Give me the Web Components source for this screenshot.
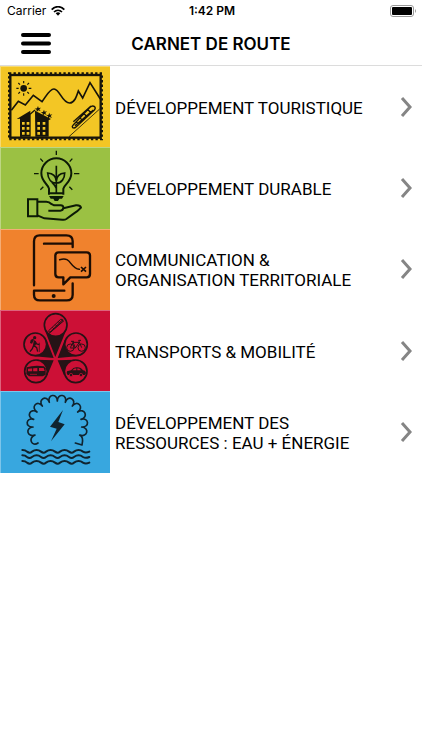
<!DOCTYPE html>
<html lang="fr">
<head>
<meta charset="utf-8">
<meta name="viewport" content="width=device-width, initial-scale=1">
<title>Carnet de route</title>
<style>
body { margin: 0; background: #fff; color: #000; font-family: Roboto, "Liberation Sans", sans-serif; }
</style>
</head>
<body>
<app-screen></app-screen>

<template id="t-status">
  <style>
    :host { display: grid; grid-template-columns: 1fr auto 1fr; align-items: center; height: 22px; padding: 0 5px 0 7px; font: 400 12px/16px Inter, "Liberation Sans", sans-serif; }
    .left { display: flex; align-items: center; gap: 5px; }
    .time { font-weight: 600; }
    .battery { justify-self: end; }
    svg { display: block; }
  </style>
  <span class="left"><span>Carrier</span>
    <svg width="14" height="10" viewBox="0 0 42 30" fill="none" stroke="#000" stroke-width="5"><path d="M2 11C13-1 29-1 40 11M9 18c7-7 17-7 24 0"/><path d="M14 22q7-6 14 0l-7 7z" fill="#000" stroke="none"/></svg>
  </span>
  <span class="time">1:42 PM</span>
  <svg class="battery" width="27" height="12" viewBox="0 0 27 12"><rect x=".5" y=".5" width="23" height="11" rx="2.5" fill="#fff" stroke="#999"/><rect x="2" y="2" width="20" height="8" rx="1" fill="#000"/><path d="M25 4q2 2 0 4z" fill="#999"/></svg>
</template>

<template id="t-nav">
  <style>
    :host { display: grid; grid-template-columns: 72px 1fr 72px; align-items: center; height: 43px; border-bottom: 1px solid #dcdcdc; }
    button { border: 0; background: none; margin: 0; padding: 0 0 0 20px; height: 43px; display: flex; align-items: center; cursor: pointer; }
    h1 { margin: 0; font: 600 17px/22px Inter, "Liberation Sans", sans-serif; text-align: center; white-space: nowrap; }
    svg { display: block; }
  </style>
  <button type="button" aria-label="Menu"><svg width="32" height="24" viewBox="0 0 32 24" stroke="#000" stroke-width="4" stroke-linecap="round"><path d="M3 3h26M3 11.5h26M3 20h26"/></svg></button>
  <h1><slot></slot></h1>
</template>

<template id="t-row">
  <style>
    :host { display: block; }
    a { display: grid; grid-template-columns: 110px 1fr 22px; align-items: center; height: 100%; color: #000; text-decoration: none; font-size: 17px; line-height: 20px; }
    .thumb { align-self: stretch; display: grid; }
    .label { padding: 4px 16px 2px 5px; }
    svg { display: block; }
  </style>
  <a href="#"><span class="thumb"><slot name="icon"></slot></span><span class="label"><slot></slot></span>
    <svg width="14" height="22" viewBox="0 0 14 22" fill="none" stroke="#858585" stroke-width="3"><path d="M2 2l8 9-8 9"/></svg></a>
</template>

<template id="t-tourism">
  <svg viewBox="0 6 330 244" preserveAspectRatio="none" fill="none" stroke="#17140a">
    <rect x="31" y="33" width="271" height="188" stroke-width="7"/>
    <rect x="27" y="28" width="279" height="198" stroke-width="6" stroke-dasharray="7 6.6"/>
    <path d="M34 139L55 112l21 11 24-29 26 19C139 96 149 74 162 75c18 1 24 42 47 42 14 0 20-18 26-36l13 21 22-46 31 49" stroke-width="5"/>
    <circle cx="71" cy="73" r="10" fill="#17140a" stroke="none"/>
    <path d="M71 51v7M71 88v7M49 73h7M86 73h8M55 57l5 5M82 84l5 5M55 89l5-5M82 62l5-5" stroke-width="3.5"/>
    <g fill="#17140a" stroke="none"><path d="M50 165l41-25v12l-25 11v55h-6v-54zM105 140l48 25-7 4v49h-40z"/><path d="M60 166h32v-18l-32 15zM60 166h32v52H60z"/>
    <path d="M114 126l2 6 7-1-5 5 4 6-7-3-5 5v-7l-6-3 7-1zM132 137l2 6 7-1-5 5 4 6-7-3-5 5v-7l-6-3 7-1zM148 146l2 6 7-1-5 5 4 6-7-3-5 5v-7l-6-3 7-1z"/></g>
    <path d="M91 150l14-12" stroke-width="4"/>
    <path d="M66 174h8v8h-8zM80 174h8v8h-8zM66 189h8v8h-8zM80 189h8v8h-8zM66 204h8v8h-8zM80 204h8v8h-8zM112 174h8v8h-8zM128 174h8v8h-8zM112 189h8v8h-8zM128 189h8v8h-8zM112 204h8v8h-8zM128 204h8v8h-8z" fill="#f3c625" stroke="none"/>
    <path d="M207 218L299 135" stroke-width="2.5"/>
    <path d="M219 184l51-54q7-7 14-2 4 4-1 10l-55 51q-5 5-10 2-3-3 1-7zM220 173l53-47M229 174l8 7M240 162l9 8M252 149l10 9M264 137l9 9M225 185l55-47" stroke-width="4"/>
  </svg>
</template>

<template id="t-durable">
  <svg viewBox="0 4 330 244" preserveAspectRatio="none" fill="none" stroke="#0c1a06" stroke-width="6">
    <path d="M147 147v-18c-3-14-23-21-23-46a45 45 0 0 1 90 0c0 25-20 32-24 46v18M145 143h48"/>
    <path d="M169 15v13M121 39l8 9M217 39l-8 9M102 84h14M222 84h16M121 132l9-9M217 132l-9-9" stroke-width="4"/>
    <path d="M169 143V66M169 112c-16 0-25-13-26-30 14 1 25 9 26 25M169 112c16 0 25-13 25-30-14 1-24 9-25 25M156 110q9 9 13 18M169 60v8" stroke-width="5"/>
    <path d="M147 151h44l-5 8h-8l-4 7h-10l-4-7h-8z" fill="#0c1a06" stroke="none"/>
    <path d="M84 161h28v51H84z"/>
    <path d="M112 168h27q9 0 15 7l8 4h20q9 0 8 8t-9 8h-36M190 188l38-9q13-1 15 7-9 10-22 18l-22 16q-5 3-12 2l-54-4-21-9"/>
  </svg>
</template>

<template id="t-communication">
  <svg viewBox="0 5 330 244" preserveAspectRatio="none" fill="none" stroke="#1c0d04" stroke-width="7" stroke-linecap="round" stroke-linejoin="round">
    <path d="M102 174V42q0-18 17-18h80q19 0 19 18v17M132 49h85M218 168v34q0 17-18 17h-80q-18 0-18-17v-12h91"/>
    <circle cx="161" cy="206" r="6" fill="#1c0d04" stroke="none"/>
    <path d="M176 75h84q10 0 10 10v55q0 10-10 10h-49l-21 21v-21h-14q-10 0-10-10V85q0-10 10-10z"/>
    <path d="M179 97c36-12 29 26 59 29" stroke-width="4.5"/><path d="M243 119l15 14M258 119l-15 14" stroke-width="5" stroke-linecap="butt"/>
  </svg>
</template>

<template id="t-transport">
  <svg viewBox="0 6 330 244" preserveAspectRatio="none" fill="none" stroke="#261316" stroke-width="5">
    <path d="M134 65L166 147 199 65zM103 145L161 150 140 96zM230 145L173 150 194 96zM142 202L161 157 110 155zM192 202L173 157 224 155z" fill="#261316" stroke="none"/>
    <g fill="#cc1036"><circle cx="167" cy="51" r="34"/><circle cx="106" cy="109" r="34"/><circle cx="228" cy="109" r="34"/><circle cx="108" cy="190" r="34"/><circle cx="227" cy="190" r="34"/></g>
    <path d="M146 68l36-34q7-2 6 5l-35 33q-7 3-7-4zM151 72l37-37M147 76l45-38M157 58l5 5M166 50l5 5M175 41l5 5" stroke-width="3"/>
    <g fill="#261316"><circle cx="104" cy="89" r="5" stroke="none"/><path d="M92 96l7-4 3 3-6 12-6-2zM102 97l7 5-2 10-7 2z" stroke="none"/></g>
    <path d="M104 98l-3 14-4 10-7 9M101 112l9 7 3 12M105 100l5 8 8 2" stroke-width="4"/><path d="M118 104v28" stroke-width="2"/>
    <circle cx="211" cy="119" r="11" stroke-width="3"/><circle cx="245" cy="119" r="11" stroke-width="3"/>
    <path d="M211 119l8-16h19l-12 17h-15M226 120l-8-20M245 119l-9-22h7M213 100h9" stroke-width="3"/>
    <path d="M80 178q24-8 52-3l5 6v19l-9 5H87l-8-7z" fill="#261316" stroke="none"/>
    <path d="M84 182l28-2v10H84zM117 180h14l3 9h-17z" fill="#cc1036" stroke="none"/><path d="M98 179v13" stroke-width="3"/><path d="M90 199h21" stroke="#cc1036" stroke-width="2"/>
    <path d="M201 190l12-3q8-11 19-9 11 0 17 9 8 0 9 9l-4 5h-51q-5-4-2-11z" fill="#261316" stroke="none"/>
    <path d="M217 187q5-6 12-6v6zM232 181q7 0 11 6h-11z" fill="#cc1036" stroke="none"/><circle cx="213" cy="201" r="5" fill="#261316" stroke="#cc1036" stroke-width="2"/><circle cx="243" cy="201" r="5" fill="#261316" stroke="#cc1036" stroke-width="2"/>
  </svg>
</template>

<template id="t-energy">
  <svg viewBox="0 7 330 244" preserveAspectRatio="none" fill="none" stroke="#10242f" stroke-width="6" stroke-linejoin="round" stroke-linecap="round">
    <path d="M114 163C96 176 82 148 105 139 82 148 74 117 99 115 74 117 77 85 101 92 77 85 90 56 111 70 90 56 112 32 127 52 112 32 140 17 148 41 140 17 172 12 172 37 172 12 204 17 196 41 204 17 232 32 217 52 232 32 254 56 233 70 254 56 267 85 243 92 267 85 270 117 245 115 270 117 262 148 239 139Q252 145 246 169L226 163" stroke-width="5"/>
    <path d="M189 64l-39 50 20 6-17 38 41-51-19-7z" fill="#10242f" stroke="none"/>
    <path id="w" d="M67 184q9 0 14 5 8 6 15 0 14-10 27 0 8 6 15 0 14-10 27 0 8 6 15 0 14-10 27 0 8 6 15 0 14-10 27 0 8 5 19 0"/>
    <use href="#w" y="16"/><use href="#w" y="33"/>
  </svg>
</template>

<template id="t-screen">
  <style>
    :host { display: block; min-height: 100vh; background: #fff; }
    nav { display: grid; grid-auto-rows: 1fr; min-height: 406px; }
  </style>
  <status-bar></status-bar>
  <nav-bar>CARNET DE ROUTE</nav-bar>
  <nav aria-label="Carnet de route">
    <topic-row><topic-icon slot="icon" name="tourism" style="--tile:#f3c625"></topic-icon>DÉVELOPPEMENT TOURISTIQUE</topic-row>
    <topic-row><topic-icon slot="icon" name="durable" style="--tile:#9bc143"></topic-icon>DÉVELOPPEMENT DURABLE</topic-row>
    <topic-row><topic-icon slot="icon" name="communication" style="--tile:#f0822d"></topic-icon>COMMUNICATION &amp; ORGANISATION TERRITORIALE</topic-row>
    <topic-row><topic-icon slot="icon" name="transport" style="--tile:#cc1036"></topic-icon>TRANSPORTS &amp; MOBILITÉ</topic-row>
    <topic-row><topic-icon slot="icon" name="energy" style="--tile:#38a7df"></topic-icon>DÉVELOPPEMENT DES RESSOURCES : EAU + ÉNERGIE</topic-row>
  </nav>
</template>

<script>
const tpl = id => document.getElementById(id).content.cloneNode(true);
const define = (tag, id) => customElements.define(tag, class extends HTMLElement {
  constructor() { super(); this.attachShadow({ mode: 'open' }).append(tpl(id)); }
});
customElements.define('topic-icon', class extends HTMLElement {
  connectedCallback() {
    if (this.shadowRoot) return;
    const root = this.attachShadow({ mode: 'open' });
    const style = document.createElement('style');
    style.textContent = ':host{display:block;background:var(--tile);box-shadow:inset 1px 1px rgba(255,255,255,.35)}svg{display:block;width:100%;height:100%}';
    root.append(style, tpl('t-' + this.getAttribute('name')));
    root.querySelector('svg').setAttribute('aria-hidden', 'true');
  }
});
define('status-bar', 't-status');
define('nav-bar', 't-nav');
define('topic-row', 't-row');
define('app-screen', 't-screen');
</script>
</body>
</html>
